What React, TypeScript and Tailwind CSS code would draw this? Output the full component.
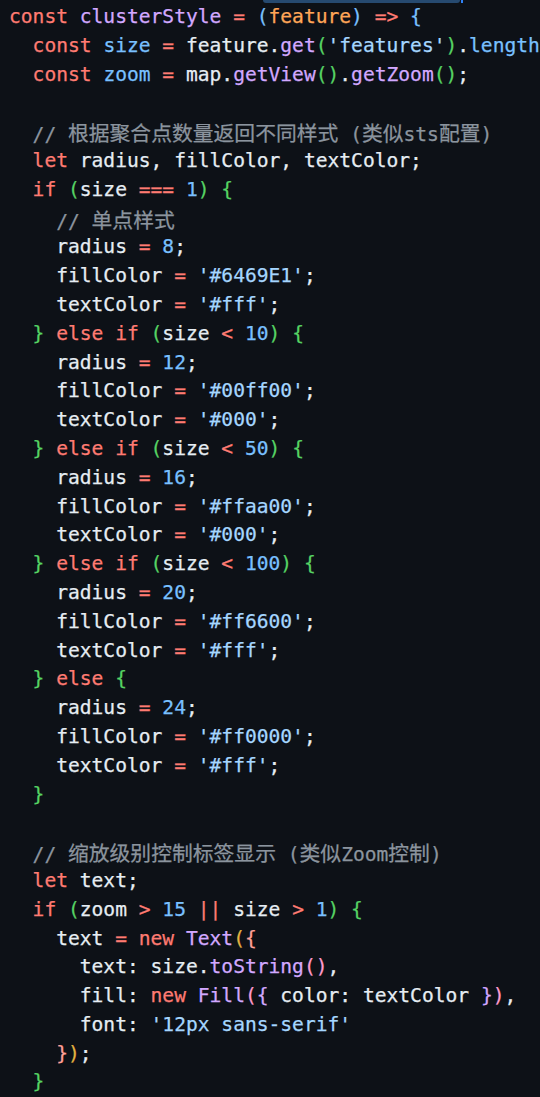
import React from "react";

type Tok = [string, string];

// GitHub dark palette + bracket pair colours
const C: Record<string, string> = {
  k: "text-[#ff7b72]",
  f: "text-[#d2a8ff]",
  v: "text-[#79c0ff]",
  s: "text-[#a5d6ff]",
  p: "text-[#ffa657]",
  c: "text-[#8b949e]",
  t: "text-[#e6edf3]",
  b1: "text-[#79c0ff]",
  b2: "text-[#56d364]",
  b3: "text-[#e3b341]",
  b4: "text-[#ffa198]",
  b5: "text-[#ff9bce]",
  b6: "text-[#d2a8ff]",
};

const ind = (n: number): Tok => ["t", " ".repeat(n)];

const assign = (name: string, val: Tok): Tok[] => [
  ind(4),
  ["t", name + " "],
  ["k", "="],
  ["t", " "],
  val,
  ["t", ";"],
];

const branch = (op: string, n: string): Tok[] => [
  ind(2),
  ["b2", "}"],
  ["t", " "],
  ["k", "else if"],
  ["t", " "],
  ["b2", "("],
  ["t", "size "],
  ["k", op],
  ["t", " "],
  ["v", n],
  ["b2", ")"],
  ["t", " "],
  ["b2", "{"],
];

const block = (r: string, fill: string, txt: string): Tok[][] => [
  assign("radius", ["v", r]),
  assign("fillColor", ["s", `'${fill}'`]),
  assign("textColor", ["s", `'${txt}'`]),
];

const lines: Tok[][] = [
  [["k", "const"], ["t", " "], ["f", "clusterStyle"], ["t", " "], ["k", "="], ["t", " "], ["b1", "("], ["p", "feature"], ["b1", ")"], ["t", " "], ["k", "=>"], ["t", " "], ["b1", "{"]],
  [ind(2), ["k", "const"], ["t", " "], ["v", "size"], ["t", " "], ["k", "="], ["t", " feature."], ["f", "get"], ["b2", "("], ["s", "'features'"], ["b2", ")"], ["t", "."], ["v", "length"], ["t", ";"]],
  [ind(2), ["k", "const"], ["t", " "], ["v", "zoom"], ["t", " "], ["k", "="], ["t", " map."], ["f", "getView"], ["b2", "()"], ["t", "."], ["f", "getZoom"], ["b2", "()"], ["t", ";"]],
  [],
  [ind(2), ["c", "// 根据聚合点数量返回不同样式 (类似sts配置)"]],
  [ind(2), ["k", "let"], ["t", " radius, fillColor, textColor;"]],
  [ind(2), ["k", "if"], ["t", " "], ["b2", "("], ["t", "size "], ["k", "==="], ["t", " "], ["v", "1"], ["b2", ")"], ["t", " "], ["b2", "{"]],
  [ind(4), ["c", "// 单点样式"]],
  ...block("8", "#6469E1", "#fff"),
  branch("<", "10"),
  ...block("12", "#00ff00", "#000"),
  branch("<", "50"),
  ...block("16", "#ffaa00", "#000"),
  branch("<", "100"),
  ...block("20", "#ff6600", "#fff"),
  [ind(2), ["b2", "}"], ["t", " "], ["k", "else"], ["t", " "], ["b2", "{"]],
  ...block("24", "#ff0000", "#fff"),
  [ind(2), ["b2", "}"]],
  [],
  [ind(2), ["c", "// 缩放级别控制标签显示 (类似Zoom控制)"]],
  [ind(2), ["k", "let"], ["t", " text;"]],
  [ind(2), ["k", "if"], ["t", " "], ["b2", "("], ["t", "zoom "], ["k", ">"], ["t", " "], ["v", "15"], ["t", " "], ["k", "||"], ["t", " size "], ["k", ">"], ["t", " "], ["v", "1"], ["b2", ")"], ["t", " "], ["b2", "{"]],
  [ind(4), ["t", "text "], ["k", "="], ["t", " "], ["k", "new"], ["t", " "], ["f", "Text"], ["b3", "("], ["b4", "{"]],
  [ind(6), ["t", "text: size."], ["f", "toString"], ["b5", "()"], ["t", ","]],
  [ind(6), ["t", "fill: "], ["k", "new"], ["t", " "], ["f", "Fill"], ["b5", "("], ["b6", "{"], ["t", " color: textColor "], ["b6", "}"], ["b5", ")"], ["t", ","]],
  [ind(6), ["t", "font: "], ["s", "'12px sans-serif'"]],
  [ind(4), ["b4", "}"], ["b3", ")"], ["t", ";"]],
  [ind(2), ["b2", "}"]],
];

// CJK glyphs are drawn a little wider than the mono cells
function withCjk(text: string) {
  return text.split(/([\u4e00-\u9fff]+)/).map((part, i) =>
    /[\u4e00-\u9fff]/.test(part) ? (
      <span key={i} className="font-['Noto_Sans_CJK_SC',sans-serif] text-[20.8px]">
        {part}
      </span>
    ) : (
      part
    )
  );
}

export default function App() {
  return (
    <div className="relative w-[540px] h-[1097px] overflow-hidden bg-[#0d1117]">
      <div className="absolute top-0 left-[263px] w-[197px] h-[3px] rounded-b-[3px] bg-[#264a70]" />
      <div className="absolute top-0 left-[461px] w-[2px] h-[3px] bg-[#2f81f7]" />

      <div className="pt-[3px] pl-[9px] font-['DejaVu_Sans_Mono','Noto_Sans_CJK_SC',monospace] text-[19.6px] leading-[28.8px] [-webkit-text-stroke:0.25px]">
        {lines.map((line, i) => (
          <div key={i} className="h-[28.8px] whitespace-pre">
            {line.map(([kind, text], j) => (
              <span key={j} className={C[kind]}>
                {kind === "c" ? withCjk(text) : text}
              </span>
            ))}
          </div>
        ))}
      </div>
    </div>
  );
}
